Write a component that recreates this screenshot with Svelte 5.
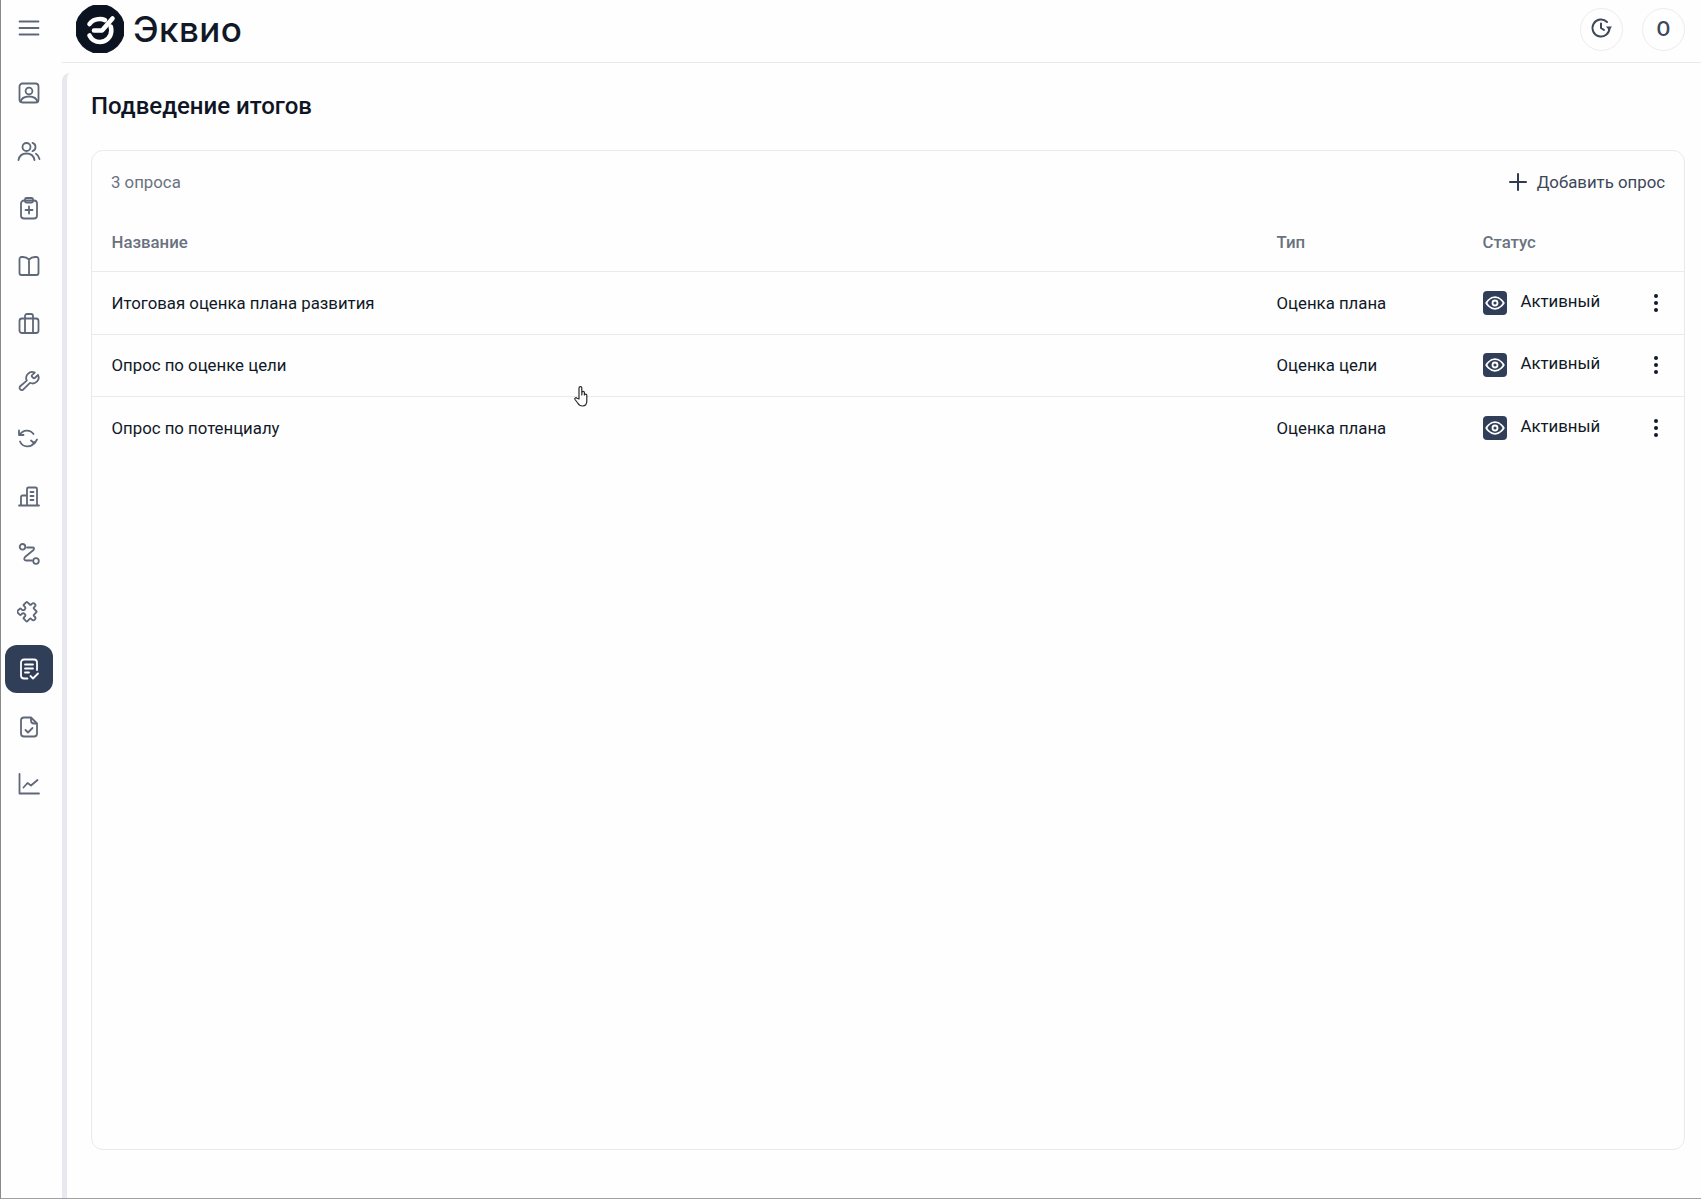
<script>
	const surveys = [
		{ name: 'Итоговая оценка плана развития', type: 'Оценка плана' },
		{ name: 'Опрос по оценке цели', type: 'Оценка цели' },
		{ name: 'Опрос по потенциалу', type: 'Оценка плана' }
	];

	const navIcons = [
		'<rect x="2.500" y="2.500" width="19" height="19" rx="3"/><circle cx="12" cy="10" r="3.400"/><path d="M3.500 21c.8-3.600 4-5.500 8.500-5.500s7.700 1.900 8.500 5.500"/>',
		'<circle cx="9.500" cy="8" r="4"/><path d="M1.500 21c.8-4 4-6.500 8-6.500s7.200 2.500 8 6.500M15.500 3.800c1.800.6 3 2.300 3 4.200s-1.200 3.600-3 4.200M19 14.800c1.800 1.100 3 3 3.500 5.200"/>',
		'<rect x="4" y="4.500" width="16" height="18" rx="3"/><rect x="8" y="2" width="8" height="4.500" rx="1.500"/><path d="M12 10.500v7M8.500 14h7"/>',
		'<path d="M12 5.500C10.500 4 8.500 3 6 3H4.500a2 2 0 0 0-2 2v14a2 2 0 0 0 2 2h15a2 2 0 0 0 2-2V5a2 2 0 0 0-2-2H18c-2.500 0-4.500 1-6 2.500zM12 5.500V21"/>',
		'<rect x="2.500" y="7.500" width="19" height="14.500" rx="2.500"/><path d="M8 22V5a2 2 0 0 1 2-2h4a2 2 0 0 1 2 2v17"/>',
		'<path d="M15 6.200a1 1 0 0 0 0 1.500l1.300 1.300a1 1 0 0 0 1.500 0l3.200-3.200a6 6 0 0 1-8 8l-6.900 6.900a2.300 2.300 0 0 1-3.200-3.200L9.800 11.600a6 6 0 0 1 8-8z"/>',
		'<path d="M3 7.500A8 8 0 0 1 16.500 7M2 3.500V8h4.500M17.500 15A8 8 0 0 1 3 14.500M14 13.500l3.500 3 2.500-4"/>',
		'<path d="M2 21.500h20M4 21.500V13a1.500 1.500 0 0 1 1.500-1.500H10M10 21.500V5A1.500 1.500 0 0 1 11.500 3.500h7A1.500 1.500 0 0 1 20 5v16.500M13.500 8h3M13.500 12h3M13.500 16h3"/>',
		'<circle cx="5.500" cy="4.800" r="2.800"/><circle cx="19" cy="19" r="2.800"/><path d="M10 5.500h5.500q2.500 0 1 2.500L8 15q-2 3 1 3.500h6"/>',
		'<path transform="translate(12 12) rotate(45) scale(1.02) translate(-11 -12)" d="M4 7h3a1 1 0 0 0 1-1V5a2 2 0 0 1 4 0v1a1 1 0 0 0 1 1h3a1 1 0 0 1 1 1v3a1 1 0 0 0 1 1h1a2 2 0 0 1 0 4h-1a1 1 0 0 0-1 1v3a1 1 0 0 1-1 1h-3a1 1 0 0 1-1-1v-1a2 2 0 0 0-4 0v1a1 1 0 0 1-1 1H4a1 1 0 0 1-1-1v-3a1 1 0 0 1 1-1h1a2 2 0 0 0 0-4H4a1 1 0 0 1-1-1V8a1 1 0 0 1 1-1z"/>',
		'<path d="M10.500 21.500H7a3 3 0 0 1-3-3v-13a3 3 0 0 1 3-3h10a3 3 0 0 1 3 3V13M8 7.500h8M8 11.500h8M8 15.500h4M13.500 19l2.500 2.500 5-5"/>',
		'<path d="M14 2.500H7a3 3 0 0 0-3 3v13a3 3 0 0 0 3 3h10a3 3 0 0 0 3-3V8.500zM14 2.500v3a3 3 0 0 0 3 3h3M8.500 15l2.500 2.500 4.500-4.500"/>',
		'<path d="M2.500 2v19.500H22M6.500 15.500l4-4.500 3.500 2.500 6.500-5.500"/>'
	];
	const activeIndex = 10;
</script>

<div class="page">
	<aside class="rail">
		<button class="burger" aria-label="Меню">
			<svg width="24" height="24" viewBox="0 0 24 24"><path d="M2.500 5.500h19M2.500 12h19M2.500 18.500h19"/></svg>
		</button>
		<nav class="nav">
			{#each navIcons as icon, i}
				<button class="nav-item" class:active={i === activeIndex} aria-label="Раздел">
					<svg width="24" height="24" viewBox="0 0 24 24">{@html icon}</svg>
				</button>
			{/each}
		</nav>
	</aside>

	<div class="right">
		<header class="topbar">
			<div class="logo">
				<svg class="mark" width="48" height="48" viewBox="0 0 48 48">
					<circle cx="24" cy="24" r="24" fill="#0b1220"/>
					<path d="M13.500 19c2-3 6-5 10.500-5 1.800 0 3.500.4 5 1.100M34.700 21.500c.4 1.300.6 2.600.6 4 0 6.500-5 11.500-11.300 11.500-4.500 0-8.500-2.500-10.500-6.500" fill="none" stroke="#fff" stroke-width="4.600"/>
					<path d="M18 25.500h8l10.500-12" fill="none" stroke="#fff" stroke-width="4.600"/>
				</svg>
				<span class="logo-text">Эквио</span>
			</div>
			<div class="top-actions">
				<button class="round" aria-label="История">
					<svg width="24" height="24" viewBox="1 1 24 24"><path d="M20.500 12a8.500 8.500 0 1 1-2.500-6M12 7.500V12l3 2"/><path class="solid" d="M23 10.600h-6l3 3.600z"/></svg>
				</button>
				<button class="round user">О</button>
			</div>
		</header>

		<main class="content">
			<h1>Подведение итогов</h1>
			<section class="card">
				<div class="card-top">
					<span class="count">3 опроса</span>
					<button class="add">
						<svg width="24" height="24" viewBox="0 0 24 24"><path d="M12 4v16M4 12h16"/></svg>
						Добавить опрос
					</button>
				</div>
				<div class="row head">
					<div>Название</div>
					<div>Тип</div>
					<div>Статус</div>
				</div>
				{#each surveys as s}
					<div class="row">
						<div>{s.name}</div>
						<div>{s.type}</div>
						<div class="status">
							<span class="eye">
								<svg width="20" height="20" viewBox="0 0 24 24"><path d="M1.500 12S5.500 5 12 5s10.500 7 10.500 7-4 7-10.500 7S1.500 12 1.500 12z"/><circle cx="12" cy="12" r="3"/></svg>
							</span>
							<span class="status-text">Активный</span>
							<span class="dots"><i></i><i></i><i></i></span>
						</div>
					</div>
				{/each}
			</section>
		</main>
	</div>

	<svg class="cursor" width="18" height="24" viewBox="0 0 18 24">
		<path d="M6 14V3a1.400 1.400 0 0 1 2.800 0v7l.1-2.500c0-1.500 2.500-1.500 2.500 0V10c.2-1.300 2.400-1.200 2.400.3V16c0 3-1.500 5-4.300 5-2.500 0-3.700-1-4.800-3L2 14.500c-.8-1.200.8-2.400 2-1.300z"/>
	</svg>
</div>

<style>
	:global(body) {
		margin: 0;
		background: #fff;
		font-family: Roboto, "Noto Sans", sans-serif;
		color: #0f1524;
	}

	.page {
		position: relative;
		display: flex;
		height: 1199px;
		box-sizing: border-box;
		border-left: 1px solid #8a8a8a;
		border-bottom: 1px solid #a0a0a0;
		overflow: hidden;
		background: #fefefe;
	}

	button {
		border: 0;
		padding: 0;
		background: none;
		font: inherit;
		color: inherit;
	}

	svg {
		display: block;
		fill: none;
		stroke: currentColor;
		stroke-width: 1.8;
		stroke-linecap: round;
		stroke-linejoin: round;
	}

	svg :global(.solid) {
		fill: currentColor;
		stroke: none;
	}

	.rail {
		flex: 0 0 61px;
		display: flex;
		flex-direction: column;
		align-items: center;
		color: #5f6878;
		padding-right: 6px;
		box-sizing: border-box;
	}

	.burger {
		height: 56px;
		display: flex;
		align-items: center;
	}

	.nav {
		display: flex;
		flex-direction: column;
		gap: 9.6px;
		margin-top: 13px;
	}

	.nav-item {
		width: 48px;
		height: 48px;
		display: flex;
		align-items: center;
		justify-content: center;
		border-radius: 12px;
	}

	.nav-item.active {
		background: #313e58;
		color: #fff;
	}

	.right {
		flex: 1;
		min-width: 0;
		display: flex;
		flex-direction: column;
	}

	.topbar {
		height: 63px;
		flex: none;
		box-sizing: border-box;
		border-bottom: 1px solid #e8e9ec;
		display: flex;
		align-items: center;
		justify-content: space-between;
		padding: 0 16px 4px 14px;
	}

	.logo {
		display: flex;
		align-items: center;
		gap: 9px;
	}

	.logo-text {
		font-family: Inter, sans-serif;
		font-size: 35px;
		font-weight: 500;
		letter-spacing: 0.4px;
		color: #111827;
	}

	.top-actions {
		display: flex;
		gap: 19px;
	}

	.round {
		width: 43px;
		height: 43px;
		display: flex;
		align-items: center;
		justify-content: center;
		border: 1px solid #ececef;
		border-radius: 50%;
		color: #3c475a;
		box-sizing: border-box;
	}

	.round svg {
		stroke-width: 2;
	}

	.user {
		font-size: 20px;
		font-weight: 500;
	}

	.content {
		flex: 1;
		min-height: 0;
		display: flex;
		flex-direction: column;
		margin-top: 10px;
		padding: 17px 16px 48px 24px;
		border-left: 5px solid #e8e9ef;
		border-top-left-radius: 8px;
	}

	h1 {
		margin: 0 0 28px;
		font-size: 24px;
		line-height: 32px;
		font-weight: 500;
		color: #0f1524;
	}

	.card {
		flex: 1;
		border: 1px solid #e9eaed;
		border-radius: 12px;
	}

	.card-top {
		display: flex;
		justify-content: space-between;
		align-items: center;
		height: 62px;
		padding: 0 19px;
	}

	.count {
		color: #6a7280;
		font-size: 16.8px;
	}

	.add {
		display: flex;
		align-items: center;
		gap: 7px;
		font-size: 16.8px;
		color: #3c475a;
	}

	.add svg {
		color: #2f3a4f;
		stroke-width: 2;
	}

	.row {
		display: grid;
		grid-template-columns: 1165px 206px 1fr;
		align-items: center;
		height: 61.5px;
		padding-left: 19.5px;
		border-bottom: 1px solid #e9eaed;
		font-size: 16.8px;
		color: #111827;
	}

	.row:last-child {
		border-bottom: 0;
	}

	.row.head {
		height: 58px;
		font-weight: 500;
		color: #6a7280;
	}

	.status {
		display: flex;
		align-items: center;
	}

	.eye {
		width: 24px;
		height: 24px;
		flex: none;
		display: flex;
		align-items: center;
		justify-content: center;
		border-radius: 4px;
		background: #313e58;
		color: #fff;
	}

	.eye svg {
		stroke-width: 2.2;
	}

	.status-text {
		margin-left: 14px;
		position: relative;
		top: -2px;
	}

	.dots {
		margin-left: auto;
		margin-right: 26px;
		display: flex;
		flex-direction: column;
		gap: 3px;
	}

	.dots i {
		display: block;
		width: 4px;
		height: 4px;
		border-radius: 50%;
		background: #111827;
	}

	.cursor {
		position: absolute;
		left: 572px;
		top: 385px;
		color: #2a2a2a;
		stroke-width: 1.2;
		fill: #fff;
	}
</style>
